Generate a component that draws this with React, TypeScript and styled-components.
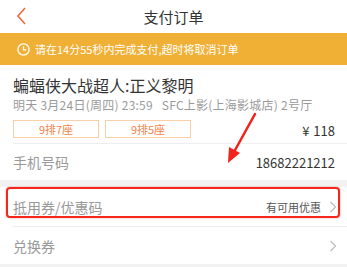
import React from "react";
import styled, { createGlobalStyle } from "styled-components";

const Global = createGlobalStyle`
  html, body { margin: 0; padding: 0; background: #f2f2f2; }
  body { font-family: "Noto Sans CJK SC", "Noto Sans", sans-serif; }
  * { box-sizing: border-box; }
`;

const Page = styled.div`
  width: 347px;
  height: 267px;
  position: relative;
  overflow: hidden;
  background: #f2f2f2;
`;

const Header = styled.div`
  height: 33px;
  background: #fff;
  display: flex;
  align-items: center;
  justify-content: center;
  position: relative;
  font-size: 15px;
  color: #333;
`;

const Back = styled.svg`
  position: absolute;
  left: 15px;
  top: 6px;
`;

const Notice = styled.div`
  height: 32px;
  background: #efb035;
  display: flex;
  align-items: center;
  padding-left: 17px;
  gap: 5px;
  color: #fff;
  font-size: 11px;
`;

const Card = styled.div`
  background: #fff;
  padding-left: 13px;
`;

const Title = styled.div`
  font-size: 16px;
  color: #333;
  padding-top: 9px;
  line-height: 22px;
`;

const Info = styled.div`
  font-size: 12px;
  letter-spacing: 0.25px;
  color: #9a9a9a;
  line-height: 16px;
  margin-top: 1px;
`;

const SeatRow = styled.div`
  display: flex;
  align-items: center;
  gap: 6px;
  margin-top: 4px;
  padding-right: 12px;
  padding-bottom: 3px;
  border-bottom: 1px solid #eee;
`;

const Seat = styled.div`
  width: 86px;
  height: 18px;
  border: 1px solid #f9cfa8;
  color: #f5834a;
  font-size: 11px;
  display: flex;
  align-items: center;
  justify-content: center;
`;

const Price = styled.div`
  margin-left: auto;
  font-size: 13px;
  color: #333;
  padding-top: 4px;
  word-spacing: 1px;
`;

const Row = styled.div<{ $h: number; $border?: boolean }>`
  height: ${p => p.$h}px;
  display: flex;
  align-items: center;
  padding-right: 12px;
  ${p => (p.$border ? "border-bottom: 1px solid #eee;" : "")}
`;

const Label = styled.div`
  font-size: 14px;
  color: #999;
`;

const Value = styled.div`
  margin-left: auto;
  font-size: 13px;
  color: #333;
`;

const Section = styled.div`
  background: #fff;
  margin-top: 7px;
  padding-left: 13px;
`;

const Hint = styled.div`
  margin-left: auto;
  font-size: 11px;
  color: #555;
  margin-right: 8px;
`;

const Chevron = styled.svg`
  display: block;
  margin-right: -2px;
`;

const Highlight = styled.div`
  position: absolute;
  left: 6px;
  top: 187px;
  width: 334px;
  height: 31px;
  border: 2px solid #f5271a;
  border-radius: 4px;
  box-shadow: 0 0 2px rgba(200, 0, 0, 0.4);
  pointer-events: none;
`;

const Arrow = styled.svg`
  position: absolute;
  left: 220px;
  top: 110px;
`;

const ChevronIcon = () => (
  <Chevron width="8" height="12" viewBox="0 0 8 12">
    <path d="M1.5 1 L6.5 6 L1.5 11" fill="none" stroke="#bbb" strokeWidth="1.2" />
  </Chevron>
);

export default function App() {
  return (
    <>
      <Global />
      <Page>
        <Header>
          支付订单
          <Back width="14" height="20" viewBox="0 0 14 20">
            <path d="M10 2 L3 10 L10 18" fill="none" stroke="#f0693a" strokeWidth="1.6" />
          </Back>
        </Header>
        <Notice>
          <svg width="13" height="13" viewBox="0 0 13 13">
            <circle cx="6.5" cy="6.5" r="5.6" fill="none" stroke="#fff" strokeWidth="1.3" />
            <path d="M6.5 3.3 V6.8 H9.3" fill="none" stroke="#fff" strokeWidth="1.3" />
          </svg>
          请在14分55秒内完成支付,超时将取消订单
        </Notice>
        <Card>
          <Title>蝙蝠侠大战超人:正义黎明</Title>
          <Info>明天 3月24日(周四) 23:59&nbsp;&nbsp;&nbsp;SFC上影(上海影城店) 2号厅</Info>
          <SeatRow>
            <Seat>9排7座</Seat>
            <Seat>9排5座</Seat>
            <Price>¥ 118</Price>
          </SeatRow>
          <Row $h={36}>
            <Label>手机号码</Label>
            <Value>18682221212</Value>
          </Row>
        </Card>
        <Section>
          <Row $h={40} $border>
            <Label>抵用券/优惠码</Label>
            <Hint>有可用优惠</Hint>
            <ChevronIcon />
          </Row>
          <Row $h={37}>
            <Label>兑换券</Label>
            <Value>
              <ChevronIcon />
            </Value>
          </Row>
        </Section>
        <Highlight />
        <Arrow width="40" height="60" viewBox="0 0 40 60">
          <path d="M35 4 L14 42" stroke="#f0221a" strokeWidth="2.5" strokeLinecap="round" />
          <path d="M8 53 L9 37 L20 43 Z" fill="#f0221a" />
        </Arrow>
      </Page>
    </>
  );
}
